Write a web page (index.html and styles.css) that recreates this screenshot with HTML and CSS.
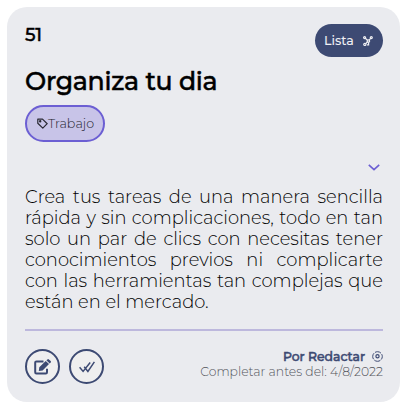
FILE: index.html
```html
<!DOCTYPE html>
<html lang="es">
<head>
<meta charset="utf-8">
<title>Organiza tu dia</title>
<link rel="stylesheet" href="styles.css">
</head>
<body>
<article class="card">
  <header class="top">
    <span class="number">51</span>
    <span class="status"><span class="status-text">Lista</span>
      <svg width="10" height="10" viewBox="0 0 10 10" fill="none" stroke="currentColor" stroke-width="1.2"><circle cx="1.6" cy="1.6" r="1"/><circle cx="8.3" cy="1.6" r="1"/><circle cx="5.4" cy="5" r="1.2"/><circle cx="1.8" cy="8.4" r="1.1"/><path d="M2.3 2.3 4.5 4.2M7.6 2.3 6.2 4.1M4.6 5.8 2.6 7.7M5.6 6.2v2.6H4"/></svg>
    </span>
  </header>
  <h1 class="title">Organiza tu dia</h1>
  <div class="tag">
    <svg width="11" height="11" viewBox="0 0 11 11" fill="none" stroke="currentColor" stroke-width="1.2" stroke-linejoin="round"><path d="M.8 1.1h4.7L10.2 5.7 5.8 10.1.8 5.2z"/><circle cx="3.2" cy="3.3" r=".6" fill="currentColor"/></svg>
    <span class="tag-text">Trabajo</span>
  </div>
  <div class="toggle"><svg width="12" height="7" viewBox="0 0 12 7" fill="none" stroke="currentColor" stroke-width="1.6"><path d="M.8.8 6 5.7 11.2.8"/></svg></div>
  <p class="description">
    <span class="line">Crea tus tareas de una manera sencilla</span>
    <span class="line">rápida y sin complicaciones, todo en tan</span>
    <span class="line">solo un par de clics con necesitas tener</span>
    <span class="line">conocimientos previos ni complicarte</span>
    <span class="line">con las herramientas tan complejas que</span>
    <span class="line last">están en el mercado.</span>
  </p>
  <footer class="bottom">
    <div class="actions">
      <button class="action" aria-label="Editar"><svg width="18" height="16" viewBox="0 0 18 16"><path d="M9.5 2.4H2.4Q1.2 2.4 1.2 3.6v9.7q0 1.2 1.2 1.2h9.4q1.2 0 1.2-1.2V9.8" fill="none" stroke="currentColor" stroke-width="2"/><path d="m4.8 12 .5-3.8 6.4-6.3 3.3 3.2-6.4 6.4zM12.4 1.3 13.4.4q.8-.6 1.5 0l1.8 1.7q.6.8 0 1.5l-1 1z" fill="currentColor"/></svg></button>
      <button class="action" aria-label="Completar"><svg width="16" height="12" viewBox="0 0 16 12" fill="none" stroke="currentColor" stroke-width="1.5"><path d="m.6 6.2 3.5 4.2 7.1-8.9M5.2 5.8l3.7 4.6L15.4.9"/></svg></button>
    </div>
    <div class="meta">
      <div class="state"><span class="state-text">Por Redactar</span><svg width="11" height="11" viewBox="0 0 11 11" fill="none" stroke="currentColor"><circle cx="5.5" cy="5.5" r="4.8" stroke-dasharray="6.4 1.14" stroke-dashoffset="3.2"/><circle cx="5.5" cy="5.3" r="1.6" stroke-width="1.2"/></svg></div>
      <div class="due">Completar antes del: 4/8/2022</div>
    </div>
  </footer>
</article>
</body>
</html>
```
FILE: styles.css
```css
* { box-sizing: border-box; }
body {
  margin: 0;
  padding: 7px;
  background: #fff;
  color: #000;
  font-family: Montserrat, Inter, sans-serif;
}
.card {
  display: flex;
  flex-direction: column;
  width: 393px;
  height: 395px;
  padding: 17px 17px 18px 18px;
  border-radius: 20px;
  background: #eaebef;
}
.top { display: flex; justify-content: space-between; height: 33px; }
.number { font-size: 18.4px; font-weight: 500; line-height: 22px; letter-spacing: -.3px; -webkit-text-stroke: .4px; }
.status {
  display: flex;
  align-items: center;
  justify-content: space-between;
  width: 68px;
  height: 33px;
  padding: 0 10px 0 9px;
  border-radius: 17px;
  background: #3d4a73;
  color: #f0f0f3;
}
.status-text { font-size: 12.6px; font-weight: 500; }
.title { margin: 8px 0 0; height: 33px; font-size: 25.2px; font-weight: 500; line-height: 33px; letter-spacing: -.26px; white-space: nowrap; -webkit-text-stroke: .5px; }
.tag {
  display: flex;
  align-items: center;
  width: 80px;
  height: 37px;
  margin-top: 7px;
  padding-left: 10px;
  border: 2px solid #6c5fd3;
  border-radius: 19px;
  background: #c8c4e8;
  color: #292833;
}
.tag-text { font-size: 12.7px; font-weight: 300; color: #24232d; }
.toggle { display: flex; justify-content: flex-end; margin-top: 22px; padding-right: 3px; height: 7px; color: #6c5fd3; }
.description { margin: 15px 0 0; font-size: 17.9px; font-weight: 300; line-height: 21px; color: #000; }
.line { display: block; white-space: nowrap; text-align: justify; text-align-last: justify; }
.last { text-align-last: left; }
.bottom {
  display: flex;
  justify-content: space-between;
  margin-top: 17px;
  padding-top: 18px;
  border-top: 2px solid #bdb8dd;
}
.actions { display: flex; gap: 9px; }
.action {
  display: flex;
  align-items: center;
  justify-content: center;
  width: 35px;
  height: 35px;
  padding: 0;
  border: 2px solid #3d4a73;
  border-radius: 50%;
  background: #efefef;
  color: #3d4a73;
}
.meta { text-align: right; white-space: nowrap; }
.state { display: flex; justify-content: flex-end; align-items: center; gap: 7px; height: 15px; color: #3d4a73; font-size: 12.4px; font-weight: 500; line-height: 15px; -webkit-text-stroke: .5px; }
.due { font-size: 12.4px; font-weight: 300; line-height: 15px; color: #55565d; }
```
